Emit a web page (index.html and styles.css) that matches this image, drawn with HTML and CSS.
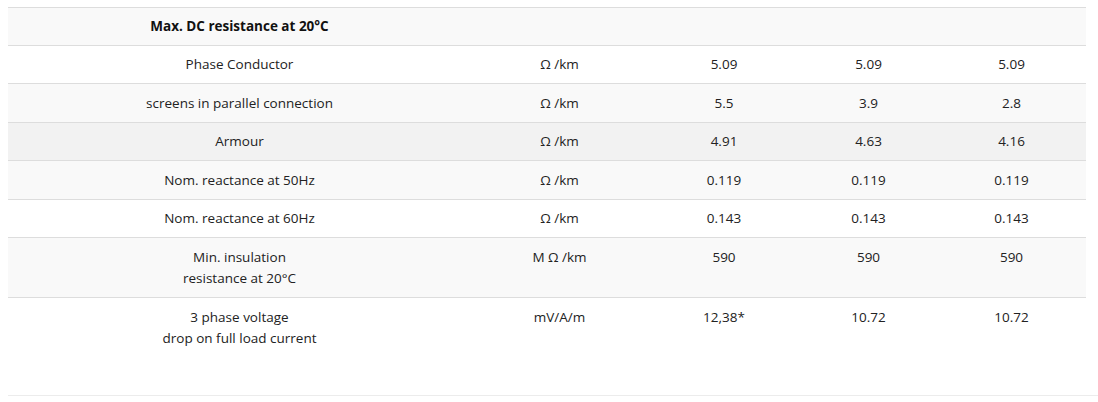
FILE: index.html
```html
<!DOCTYPE html>
<html lang="en">
<head>
<meta charset="utf-8">
<title>Electrical data</title>
<link rel="stylesheet" href="styles.css">
</head>
<body>
<div class="wrap">
  <table class="spec">
    <colgroup>
      <col class="c1"><col class="c2"><col class="c3"><col class="c4"><col class="c5">
    </colgroup>
    <tbody>
      <tr class="gray head"><th>Max. DC resistance at 20°C</th><td></td><td></td><td></td><td></td></tr>
      <tr class="white"><td>Phase Conductor</td><td>Ω /km</td><td>5.09</td><td>5.09</td><td>5.09</td></tr>
      <tr class="gray"><td>screens in parallel connection</td><td>Ω /km</td><td>5.5</td><td>3.9</td><td>2.8</td></tr>
      <tr class="hover"><td>Armour</td><td>Ω /km</td><td>4.91</td><td>4.63</td><td>4.16</td></tr>
      <tr class="gray"><td>Nom. reactance at 50Hz</td><td>Ω /km</td><td>0.119</td><td>0.119</td><td>0.119</td></tr>
      <tr class="white"><td>Nom. reactance at 60Hz</td><td>Ω /km</td><td>0.143</td><td>0.143</td><td>0.143</td></tr>
      <tr class="gray"><td>Min. insulation<br>resistance at 20°C</td><td>M Ω /km</td><td>590</td><td>590</td><td>590</td></tr>
      <tr class="white"><td>3 phase voltage<br>drop on full load current</td><td>mV/A/m</td><td>12,38*</td><td>10.72</td><td>10.72</td></tr>
    </tbody>
  </table>
</div>
</body>
</html>
```

FILE: styles.css
```css
html, body {
  margin: 0;
  padding: 0;
  background: #ffffff;
}
body {
  padding: 7px 0 0 8px;
  font-family: "Open Sans", "Noto Sans", "Liberation Sans", sans-serif;
  font-size: 13.5px;
  color: #222222;
}
.wrap {
  width: 1090px;
  padding-bottom: 37.5px;
  border-bottom: 1px solid #ececec;
}
.spec {
  width: 1078px;
  border-collapse: collapse;
  table-layout: fixed;
}
.c1 { width: 463px; }
.c2 { width: 177px; }
.c3 { width: 152px; }
.c4 { width: 137px; }
.c5 { width: 149px; }
.spec th,
.spec td {
  padding: 8.5px 0 7.5px;
  line-height: 21.5px;
  text-align: center;
  vertical-align: top;
  border-top: 1px solid #dddddd;
  font-weight: normal;
}
.head th,
.head td {
  padding-top: 7.5px;
  padding-bottom: 7.5px;
}
.spec th {
  font-weight: bold;
  color: #111111;
}
.gray { background: #f9f9f9; }
.white { background: #ffffff; }
.hover { background: #f2f2f2; }
```
